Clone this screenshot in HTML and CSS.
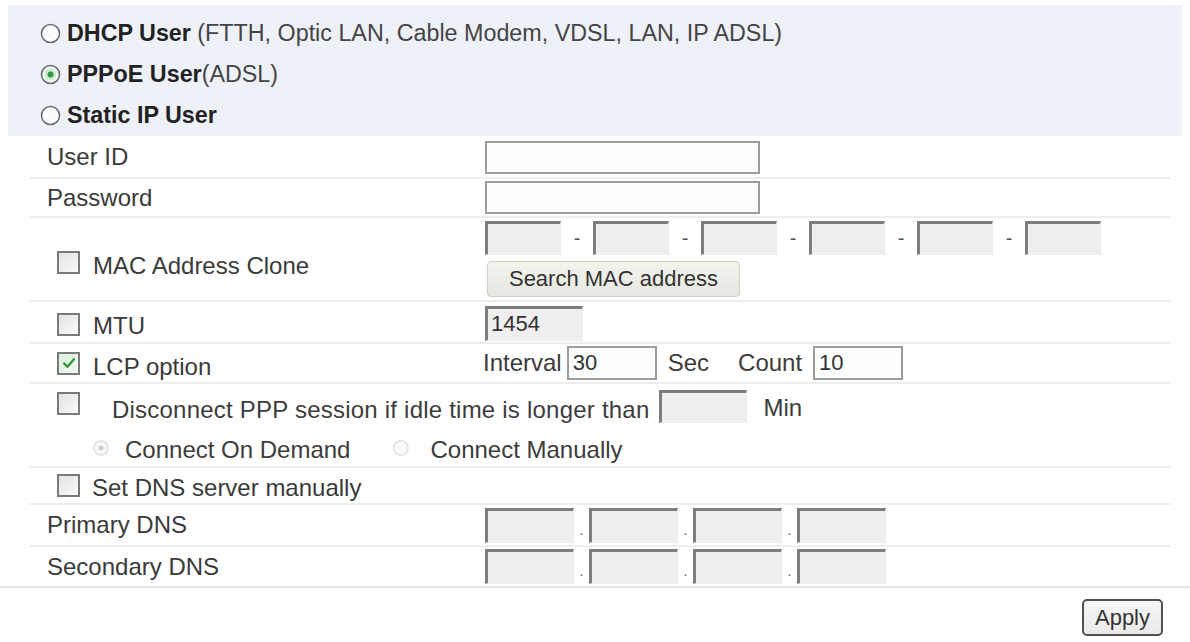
FILE: index.html
```html
<!DOCTYPE html>
<html>
<head>
<meta charset="utf-8">
<title>WAN Setup</title>
<link rel="stylesheet" href="styles.css">
</head>
<body>
<div class="page">
  <div class="modes">
    <div class="mode">
      <svg class="radio" viewBox="0 0 20 20"><circle cx="10" cy="10" r="8.6" fill="#fbfcfd" stroke="#6a6f74" stroke-width="1.5"/></svg>
      <span><b>DHCP User</b> (FTTH, Optic LAN, Cable Modem, VDSL, LAN, IP ADSL)</span>
    </div>
    <div class="mode">
      <svg class="radio" viewBox="0 0 20 20"><circle cx="10" cy="10" r="8.6" fill="#eef6ee" stroke="#6a6f74" stroke-width="1.5"/><circle cx="10" cy="10" r="5.4" fill="#cfe9cf"/><circle cx="10" cy="10" r="2.8" fill="#2f9a3c"/></svg>
      <span><b>PPPoE User</b>(ADSL)</span>
    </div>
    <div class="mode">
      <svg class="radio" viewBox="0 0 20 20"><circle cx="10" cy="10" r="8.6" fill="#fbfcfd" stroke="#6a6f74" stroke-width="1.5"/></svg>
      <span><b>Static IP User</b></span>
    </div>
  </div>

  <div class="form">
    <div class="row r-uid">
      <div class="lab">User ID</div>
      <div class="val"><input class="txt long" type="text"></div>
    </div>
    <div class="row r-pwd">
      <div class="lab">Password</div>
      <div class="val"><input class="txt long" type="password"></div>
    </div>
    <div class="row r-mac">
      <div class="lab cbl"><span class="cb"></span><span class="cbt">MAC Address Clone</span></div>
      <div class="val col">
        <div class="macs">
          <input class="dis mac" type="text" disabled><span class="sep">-</span>
          <input class="dis mac" type="text" disabled><span class="sep">-</span>
          <input class="dis mac" type="text" disabled><span class="sep">-</span>
          <input class="dis mac" type="text" disabled><span class="sep">-</span>
          <input class="dis mac" type="text" disabled><span class="sep">-</span>
          <input class="dis mac" type="text" disabled>
        </div>
        <button class="btn search" type="button">Search MAC address</button>
      </div>
    </div>
    <div class="row r-mtu">
      <div class="lab cbl"><span class="cb"></span><span class="cbt">MTU</span></div>
      <div class="val"><input class="dis mtu" type="text" value="1454" disabled></div>
    </div>
    <div class="row r-lcp">
      <div class="lab cbl"><span class="cb on"><svg viewBox="0 0 20 20"><path d="M4.5 10.5 L8.3 14.2 L15.5 5.8" fill="none" stroke="#2f9a3c" stroke-width="2.6" stroke-linecap="round" stroke-linejoin="round"/></svg></span><span class="cbt">LCP option</span></div>
      <div class="val lcp">
        <span class="t-int">Interval</span>
        <input class="txt short" type="text" value="30">
        <span class="t-sec">Sec</span>
        <span class="t-cnt">Count</span>
        <input class="txt short" type="text" value="10">
      </div>
    </div>
    <div class="row r-idle">
      <span class="cb"></span>
      <span class="idle-t">Disconnect PPP session if idle time is longer than</span>
      <input class="dis idle" type="text" disabled>
      <span class="t-min">Min</span>
    </div>
    <div class="row r-conn">
      <svg class="radio sm" viewBox="0 0 20 20"><circle cx="10" cy="10" r="8" fill="#f7f7f7" stroke="#d6d6d6" stroke-width="1.2"/><circle cx="10" cy="10" r="2.6" fill="#c8c8c8"/></svg>
      <span class="ct1">Connect On Demand</span>
      <svg class="radio sm r2" viewBox="0 0 20 20"><circle cx="10" cy="10" r="8" fill="#fafafa" stroke="#d6d6d6" stroke-width="1.2"/></svg>
      <span class="ct2">Connect Manually</span>
    </div>
    <div class="row r-dns">
      <div class="lab cbl"><span class="cb"></span><span class="cbt">Set DNS server manually</span></div>
    </div>
    <div class="row r-pdns">
      <div class="lab">Primary DNS</div>
      <div class="val ip">
        <input class="dis oct" type="text" disabled><span class="dot">.</span>
        <input class="dis oct" type="text" disabled><span class="dot">.</span>
        <input class="dis oct" type="text" disabled><span class="dot">.</span>
        <input class="dis oct" type="text" disabled>
      </div>
    </div>
    <div class="row r-sdns last">
      <div class="lab">Secondary DNS</div>
      <div class="val ip">
        <input class="dis oct" type="text" disabled><span class="dot">.</span>
        <input class="dis oct" type="text" disabled><span class="dot">.</span>
        <input class="dis oct" type="text" disabled><span class="dot">.</span>
        <input class="dis oct" type="text" disabled>
      </div>
    </div>
  </div>

  <div class="foot">
    <button class="btn apply" type="button">Apply</button>
  </div>
</div>
</body>
</html>
```

FILE: styles.css
```css
* { box-sizing: border-box; }
html, body { margin: 0; padding: 0; background: #ffffff; }
body {
  font-family: "Liberation Sans", Arial, sans-serif;
  font-size: 24px;
  color: #3c3c3c;
  width: 1190px;
  height: 642px;
  overflow: hidden;
}

.modes {
  margin: 5px 8px 0 8px;
  padding: 8px 0 0 32px;
  background: #eff1f8;
  height: 131px;
  display: flex;
  flex-direction: column;
}
.mode {
  height: 41px;
  display: flex;
  align-items: center;
  color: #444;
  font-size: 23.3px;
}
.mode b { color: #222; }
.radio { width: 21px; height: 21px; flex: none; margin-right: 6px; }

.form {
  margin: 1px 0 0 30px;
  width: 1140px;
  display: flex;
  flex-direction: column;
}
.row {
  display: flex;
  align-items: center;
  border-bottom: 2px solid #ededed;
}
.row.last { border-bottom: none; }
.lab {
  width: 455px;
  flex: none;
  padding-left: 17px;
  display: flex;
  align-items: center;
  color: #3a3a3a;
}
.lab.cbl { padding-left: 27px; }
.cbt { margin-left: 13px; padding-top: 8px; }
.val { display: flex; align-items: center; }
.val.col { flex-direction: column; align-items: flex-start; align-self: flex-start; padding-top: 3px; }

.cb {
  width: 23px;
  height: 23px;
  flex: none;
  border: 2px solid #7a7a7a;
  background: linear-gradient(135deg, #e3e3e3, #fafafa);
  display: flex;
  align-items: center;
  justify-content: center;
}
.cb.on { background: linear-gradient(135deg, #dcefdc, #f3faf3); }
.cb svg { width: 18px; height: 18px; }

input { font-family: "Liberation Sans", Arial, sans-serif; font-size: 22px; color: #333; margin: 0; }
.txt {
  border: 2px solid #9c9c9c;
  background: #fcfdfd;
  padding: 2px 4px;
}
.txt.long { width: 275px; height: 33px; }
.txt.short { width: 90px; height: 34px; }
.dis {
  background: #efefef;
  border-style: solid;
  border-width: 3px 1px 1px 3px;
  border-color: #7d7d7d #ededed #ededed #7d7d7d;
  padding: 0 3px;
}

.r-uid { height: 42px; }
.r-pwd { height: 39px; }
.r-mac { height: 84px; align-items: flex-start; }
.r-mac .lab { align-self: center; padding-top: 6px; }
.macs { display: flex; align-items: center; }
.mac { width: 76px; height: 34px; }
.sep { width: 32px; text-align: center; font-size: 20px; color: #555; }
.btn {
  font-family: "Liberation Sans", Arial, sans-serif;
  color: #333;
  cursor: default;
}
.search {
  margin-top: 6px;
  margin-left: 2px;
  width: 253px;
  height: 36px;
  font-size: 22px;
  background: linear-gradient(#f4f4ef, #e7e7e1);
  border: 1px solid #cfcfc8;
  border-radius: 4px;
  padding: 0;
}

.r-mtu { height: 42px; }
.mtu { width: 98px; height: 35px; padding-top: 0; line-height: 26px; vertical-align: top; }
.r-mtu .val { padding-top: 2px; }
.r-mtu .cb { margin-top: 4px; }

.r-lcp { height: 40px; }
.lcp { margin-left: -2px; }
.t-int { margin-right: 5px; }
.t-sec { margin-left: 11px; }
.t-cnt { margin-left: 29px; margin-right: 11px; }

.r-idle { height: 45px; border-bottom: none; padding-left: 27px; }
.r-idle .cb { margin-top: -6px; }
.idle-t { margin-left: 32px; padding-top: 6px; letter-spacing: 0.22px; }
.idle { width: 88px; height: 33px; margin-left: 9px; }
.t-min { margin-left: 17px; padding-top: 2px; }

.r-conn { height: 39px; padding-left: 62px; }
.radio.sm { width: 18px; height: 18px; margin-right: 0; }
.ct1 { margin-left: 15px; padding-top: 4px; }
.ct2 { margin-left: 20px; padding-top: 4px; }
.radio.r2 { margin-left: 42px; }

.r-dns { height: 37px; }
.r-dns .cbt { margin-left: 12px; padding-top: 4px; }

.r-pdns { height: 42px; }
.r-sdns { height: 39px; }
.ip { align-items: flex-end; }
.oct { width: 89px; height: 35px; }
.dot { width: 15px; text-align: center; font-size: 14px; line-height: 14px; padding-bottom: 6px; color: #555; }

.foot {
  border-top: 2px solid #e6e6e6;
  height: 55px;
  display: flex;
  justify-content: flex-end;
  align-items: flex-start;
  padding: 11px 27px 0 0;
}
.apply {
  width: 81px;
  height: 37px;
  font-size: 22px;
  background: linear-gradient(#f7f7f7, #e9e9e9);
  border: 2px solid #505050;
  border-radius: 5px;
  padding: 0;
}
```
